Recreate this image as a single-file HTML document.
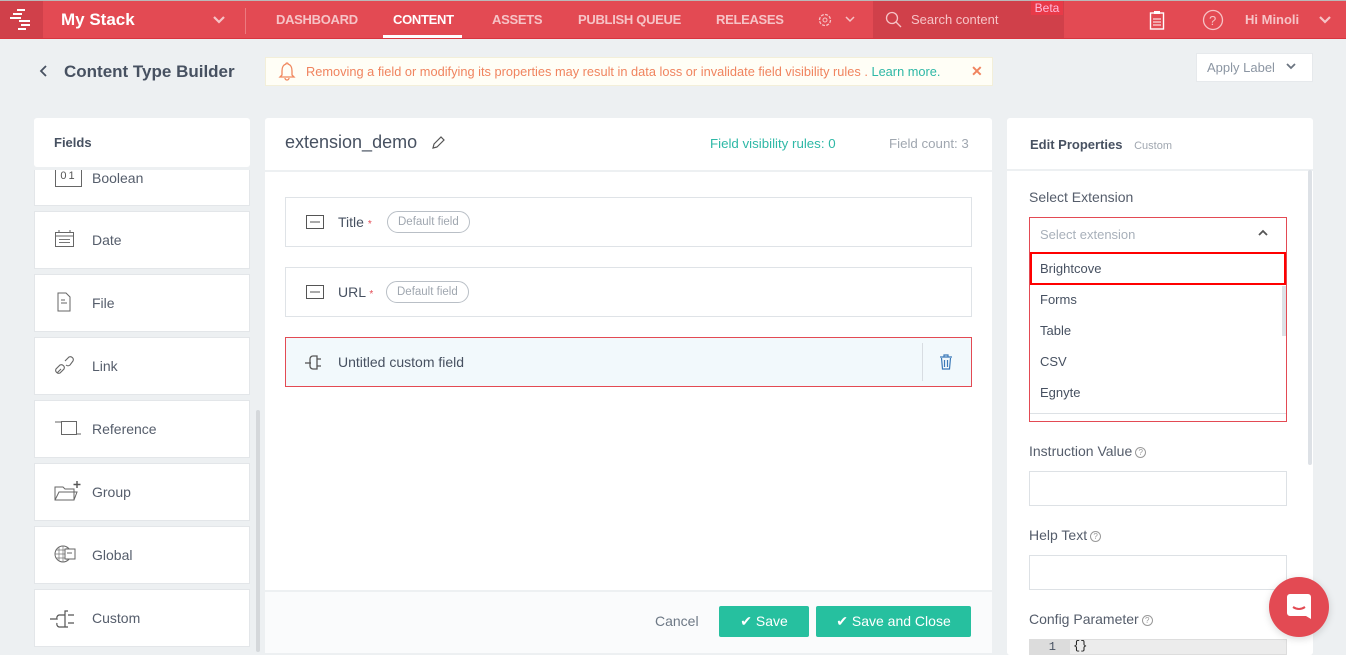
<!DOCTYPE html>
<html><head><meta charset="utf-8">
<style>
*{box-sizing:border-box;margin:0;padding:0}
body{width:1346px;height:655px;overflow:hidden;background:#edf0f2;font-family:"Liberation Sans",sans-serif;position:relative;color:#475161}
.abs{position:absolute}
.hdr{left:0;top:0;width:1346px;height:39px;background:#e34a53;border-top:1px solid #b9b9b9;border-bottom:1px solid #d8353f}
.nav{top:12px;font-size:13px;color:#f6c3c6;font-weight:bold;letter-spacing:-0.3px}
.panel{background:#fff}
.item{left:34px;width:216px;height:58px;background:#fff;border:1px solid #e3e6e9;font-size:14px;color:#555d6b}
.item span{position:absolute;left:57px;top:20px}
.item svg{position:absolute;left:18px;top:16px}
.row{left:285px;width:687px;height:50px;background:#fff;border:1px solid #dfe3e7;font-size:14px;color:#475161}
.pill{position:absolute;top:13px;height:22px;border:1px solid #b9bfc6;border-radius:11px;font-size:11.5px;color:#a0a7b0;padding:4px 10px}
.lbl{left:1029px;font-size:14px;color:#555d6b}
.inp{left:1029px;width:258px;height:35px;border:1px solid #dde1e5;background:#fff}
.opt{left:1040px;font-size:13px;color:#475161}
.q{display:inline-block;width:11px;height:11px;border:1px solid #999;border-radius:50%;font-size:8px;text-align:center;line-height:9px;color:#999;vertical-align:middle;margin-left:3px}
</style></head><body>
<div class="abs hdr"></div>
<div class="abs" style="left:0;top:1px;width:43px;height:37px;background:#d0404a"></div>
<svg class="abs" style="left:8px;top:8px" width="28" height="24"><g fill="#fff"><rect x="9" y="1" width="8" height="2"/><rect x="5" y="5" width="9" height="2"/><rect x="2" y="9" width="11" height="2"/><rect x="11" y="12" width="11" height="2"/><rect x="13" y="16" width="9" height="2"/><rect x="10" y="20" width="8" height="2"/></g></svg>
<div class="abs" style="left:61px;top:10px;color:#fff;font-size:17px;font-weight:bold">My Stack</div>
<svg class="abs" style="left:212px;top:15px" width="14" height="10"><path d="M2 2l5 5 5-5" stroke="#f6c3c6" stroke-width="2.2" fill="none"/></svg>
<div class="abs" style="left:245px;top:8px;width:1px;height:26px;background:#ec7a80"></div>
<div class="abs nav" style="left:276px">DASHBOARD</div>
<div class="abs nav" style="left:393px;color:#fff">CONTENT</div>
<div class="abs" style="left:383px;top:35px;width:79px;height:3px;background:#fff"></div>
<div class="abs nav" style="left:492px">ASSETS</div>
<div class="abs nav" style="left:578px">PUBLISH QUEUE</div>
<div class="abs nav" style="left:716px">RELEASES</div>
<svg class="abs" style="left:817px;top:12px" width="16" height="16"><circle cx="8" cy="8" r="5.5" stroke="#f6c3c6" stroke-width="1.3" fill="none" stroke-dasharray="3 1.3"/><circle cx="8" cy="8" r="2" stroke="#f6c3c6" fill="none"/></svg>
<svg class="abs" style="left:845px;top:16px" width="10" height="8"><path d="M1 1l4 4 4-4" stroke="#f6c3c6" stroke-width="1.5" fill="none"/></svg>
<div class="abs" style="left:873px;top:1px;width:191px;height:37px;background:#d0404a"></div>
<svg class="abs" style="left:885px;top:11px" width="18" height="18"><circle cx="7" cy="7" r="5.5" stroke="#f6c3c6" stroke-width="1.3" fill="none"/><path d="M11 11l5 5" stroke="#f6c3c6" stroke-width="1.3"/></svg>
<div class="abs" style="left:911px;top:12px;font-size:13px;color:#f6c3c6">Search content</div>
<div class="abs" style="left:1031px;top:1px;width:32px;height:14px;background:#e83a48;color:#fbd;font-size:12px;text-align:center">Beta</div>
<svg class="abs" style="left:1149px;top:10px" width="16" height="20"><rect x="1.5" y="3" width="13" height="16" stroke="#fff" stroke-width="1.4" fill="none"/><rect x="5" y="1" width="6" height="3" fill="#fff"/><path d="M4 9h8M4 12h8M4 15h8" stroke="#fff"/></svg>
<svg class="abs" style="left:1202px;top:9px" width="22" height="22"><circle cx="11" cy="11" r="9.5" stroke="#f6c3c6" stroke-width="1.3" fill="none"/><text x="7" y="16" font-size="13" fill="#f6c3c6" font-family="Liberation Sans">?</text></svg>
<div class="abs" style="left:1245px;top:12px;font-size:13px;color:#f6c3c6;font-weight:bold">Hi  Minoli</div>
<svg class="abs" style="left:1318px;top:15px" width="14" height="10"><path d="M2 2l5 5 5-5" stroke="#f6c3c6" stroke-width="2.2" fill="none"/></svg>

<svg class="abs" style="left:39px;top:64px" width="10" height="14"><path d="M7 2L2 7l5 5" stroke="#475161" stroke-width="1.8" fill="none"/></svg>
<div class="abs" style="left:64px;top:62px;font-size:17px;color:#475161;font-weight:bold">Content Type Builder</div>
<div class="abs" style="left:265px;top:57px;width:728px;height:29px;background:#fffef6;border:1px solid #f3efd9"></div>
<svg class="abs" style="left:277px;top:61px" width="20" height="20"><path d="M10 2a1 1 0 0 1 1 1c3 1 4 3 4 7v4l2 2H3l2-2v-4c0-4 1-6 4-7a1 1 0 0 1 1-1zM8 17a2 2 0 0 0 4 0" stroke="#f0875e" stroke-width="1.3" fill="none"/></svg>
<div class="abs" style="left:306px;top:64px;font-size:12.8px;color:#f0845f">Removing a field or modifying its properties may result in data loss or invalidate field visibility rules . <span style="color:#2eb8a6">Learn more.</span></div>
<div class="abs" style="left:971px;top:63px;font-size:14px;color:#f0845f;font-weight:bold">✕</div>
<div class="abs" style="left:1196px;top:53px;width:117px;height:29px;background:#fff;border:1px solid #e6e9ec;font-size:13px;color:#8c96a3;padding:6px 0 0 10px">Apply Label</div>
<svg class="abs" style="left:1286px;top:63px" width="10" height="8"><path d="M1 1l4 4 4-4" stroke="#6b7480" stroke-width="1.8" fill="none"/></svg>

<!-- fields panel -->
<div class="abs panel" style="left:34px;top:118px;width:216px;height:49px;border-radius:3px"></div>
<div class="abs" style="left:54px;top:135px;font-size:13px;font-weight:bold;color:#475161">Fields</div>
<div class="abs item" style="top:170px;height:36px;border-top:none"><div style="position:absolute;left:20px;top:0;width:27px;height:17px;border:1px solid #666;border-top:none;font-size:11px;text-align:center;letter-spacing:2px;color:#555">01</div><span style="top:0">Boolean</span></div>
<div class="abs item" style="top:211px"><svg width="22" height="22"><rect x="2.5" y="4.5" width="18" height="14" stroke="#666" fill="none"/><path d="M2 8h19M6 2v3M17 2v3" stroke="#666"/><g fill="#777"><rect x="6" y="11" width="11" height="1"/><rect x="6" y="14" width="11" height="1"/></g></svg><span>Date</span></div>
<div class="abs item" style="top:274px"><svg width="22" height="22"><path d="M5 2h8l4 4v14H5z" stroke="#666" fill="none"/><path d="M8 9h4M8 12h6" stroke="#666"/></svg><span>File</span></div>
<div class="abs item" style="top:337px"><svg width="24" height="22"><path d="M4 19l4-4M3 15a3 3 0 0 0 4 4l4-4a3 3 0 0 0-4-4zM13 11a3 3 0 0 0 4 0l3-4a3 3 0 0 0-4-4l-4 4" stroke="#666" fill="none" stroke-width="1.1"/></svg><span>Link</span></div>
<div class="abs item" style="top:400px"><svg width="30" height="22"><rect x="8.5" y="4.5" width="15" height="13" stroke="#666" fill="none"/><path d="M2 5h6M23 17h5" stroke="#666"/></svg><span>Reference</span></div>
<div class="abs item" style="top:463px"><svg width="30" height="22"><path d="M2 20V7h8l2 2h9v11zM2 20l4-8h18l-3 8" stroke="#666" fill="none"/><path d="M24 1v7M20.5 4.5h7" stroke="#555" stroke-width="1.4"/></svg><span>Group</span></div>
<div class="abs item" style="top:526px"><svg width="26" height="22"><circle cx="10" cy="11" r="8" stroke="#666" fill="none"/><path d="M2 11h16M10 3v16M6 4v14M14 4v14M3 7h14M3 15h14" stroke="#777" stroke-width=".7"/><rect x="12" y="6" width="10" height="10" fill="#fff" stroke="#666"/><path d="M14 10h5" stroke="#666"/></svg><span>Global</span></div>
<div class="abs item" style="top:589px"><svg width="30" height="22" style="left:14px"><path d="M1 13h7a3 3 0 0 1 2-4h6v12h-6a3 3 0 0 1-2-4M16 9V5h3M16 17v4h3" stroke="#555" fill="none" stroke-width="1.2"/><path d="M19 9h6M19 17h6" stroke="#555" stroke-width="1.2"/></svg><span>Custom</span></div>
<div class="abs" style="left:256px;top:410px;width:4px;height:242px;background:#d5d8db;border-radius:2px"></div>

<!-- middle panel -->
<div class="abs panel" style="left:265px;top:118px;width:727px;height:535px;border-radius:3px"></div>
<div class="abs" style="left:265px;top:170px;width:727px;height:2px;background:#edf0f2"></div>
<div class="abs" style="left:285px;top:132px;font-size:18px;color:#475161">extension_demo</div>
<svg class="abs" style="left:430px;top:135px" width="16" height="16"><path d="M3 13l1-4 7-7 3 3-7 7zM3 13l4-1" stroke="#555" fill="none" stroke-width="1.2"/></svg>
<div class="abs" style="left:710px;top:136px;font-size:13.3px;color:#2eb8a6">Field visibility rules: 0</div>
<div class="abs" style="left:889px;top:136px;font-size:13.3px;color:#a0a7b0">Field count: 3</div>
<div class="abs row" style="top:197px"><svg style="position:absolute;left:20px;top:17px" width="18" height="14"><rect x=".5" y=".5" width="17" height="13" stroke="#555" fill="none"/><path d="M4 7h10" stroke="#555"/></svg><span style="position:absolute;left:52px;top:16px">Title <span style="color:#e34a53;font-size:10px">*</span></span><div class="pill" style="left:101px">Default field</div></div>
<div class="abs row" style="top:267px"><svg style="position:absolute;left:20px;top:17px" width="18" height="14"><rect x=".5" y=".5" width="17" height="13" stroke="#555" fill="none"/><path d="M4 7h10" stroke="#555"/></svg><span style="position:absolute;left:52px;top:16px">URL <span style="color:#e34a53;font-size:10px">*</span></span><div class="pill" style="left:100px">Default field</div></div>
<div class="abs row" style="top:337px;background:#f2f9fc;border-color:#e34a53"><svg style="position:absolute;left:18px;top:14px" width="26" height="20"><path d="M1 11h6" stroke="#555" stroke-width="1.3"/><path d="M13 4h-4a3 3 0 0 0-3 3v7a3 3 0 0 0 3 3h4z" stroke="#555" stroke-width="1.3" fill="none"/><path d="M13 7h4M13 14h4" stroke="#555" stroke-width="1.3"/></svg><span style="position:absolute;left:52px;top:16px">Untitled custom field</span><div style="position:absolute;left:636px;top:5px;width:1px;height:38px;background:#d8dde2"></div><svg style="position:absolute;left:653px;top:16px" width="14" height="16"><path d="M1 3h12M5 3V1h4v2M2.5 4l1 11h7l1-11M5.5 6v7M8.5 6v7" stroke="#3a79b8" fill="none" stroke-width="1.2"/></svg></div>
<div class="abs" style="left:265px;top:590px;width:727px;height:63px;background:#fafbfc;border-top:2px solid #edf0f2"></div>
<div class="abs" style="left:655px;top:613px;font-size:14px;color:#6d7885">Cancel</div>
<div class="abs" style="left:719px;top:606px;width:90px;height:31px;background:#26c09f;border-radius:2px;color:#fff;font-size:14px;text-align:center;line-height:31px">✔ Save</div>
<div class="abs" style="left:816px;top:606px;width:155px;height:31px;background:#26c09f;border-radius:2px;color:#fff;font-size:14px;text-align:center;line-height:31px">✔ Save and Close</div>

<!-- right panel -->
<div class="abs panel" style="left:1007px;top:118px;width:306px;height:537px;border-radius:3px"></div>
<div class="abs" style="left:1007px;top:169px;width:306px;height:2px;background:#edf0f2"></div>
<div class="abs" style="left:1030px;top:137px;font-size:13px;font-weight:bold;color:#475161">Edit Properties <span style="font-weight:normal;font-size:11px;color:#a0a7b0;margin-left:8px">Custom</span></div>
<div class="abs" style="left:1308px;top:170px;width:4px;height:295px;background:#dde1e6;border-radius:2px"></div>
<div class="abs lbl" style="top:189px">Select Extension</div>
<div class="abs" style="left:1029px;top:217px;width:258px;height:205px;border:1px solid #e34a53;background:#fff"></div>
<div class="abs" style="left:1040px;top:227px;font-size:13px;color:#a8b0ba">Select extension</div>
<svg class="abs" style="left:1257px;top:229px" width="12" height="8"><path d="M2 6l4-4 4 4" stroke="#555" stroke-width="1.8" fill="none"/></svg>
<div class="abs" style="left:1030px;top:252px;width:256px;height:162px;border-bottom:1px solid #dde1e5;background:#fff"></div>
<div class="abs" style="left:1030px;top:252px;width:256px;height:33px;border:2px solid #f00"></div>
<div class="abs opt" style="top:261px">Brightcove</div>
<div class="abs opt" style="top:292px">Forms</div>
<div class="abs opt" style="top:323px">Table</div>
<div class="abs opt" style="top:354px">CSV</div>
<div class="abs opt" style="top:385px">Egnyte</div>
<div class="abs" style="left:1282px;top:286px;width:4px;height:50px;background:#dde1e6"></div>
<div class="abs lbl" style="top:443px">Instruction Value<span class="q">?</span></div>
<div class="abs inp" style="top:471px"></div>
<div class="abs lbl" style="top:527px">Help Text<span class="q">?</span></div>
<div class="abs inp" style="top:555px"></div>
<div class="abs lbl" style="top:611px">Config Parameter<span class="q">?</span></div>
<div class="abs" style="left:1029px;top:639px;width:258px;height:16px;background:#ececec;border:1px solid #ddd"></div>
<div class="abs" style="left:1030px;top:640px;width:40px;height:15px;background:#dcdcdc;font-size:12px;text-align:right;padding-right:14px;font-family:'Liberation Mono',monospace">1</div>
<div class="abs" style="left:1073px;top:639px;font-size:12px;font-family:'Liberation Mono',monospace;color:#222">{}</div>
<div class="abs" style="left:1269px;top:577px;width:60px;height:60px;border-radius:50%;background:#e34a53;box-shadow:0 2px 8px rgba(0,0,0,.15)"></div>
<svg class="abs" style="left:1284px;top:592px" width="30" height="30"><path d="M3 5a3 3 0 0 1 3-3h18a3 3 0 0 1 3 3v22l-5-3H6a3 3 0 0 1-3-3z" fill="#fff"/><path d="M9 15q6 4 12 0" stroke="#e34a53" stroke-width="2" fill="none"/></svg>
</body></html>
